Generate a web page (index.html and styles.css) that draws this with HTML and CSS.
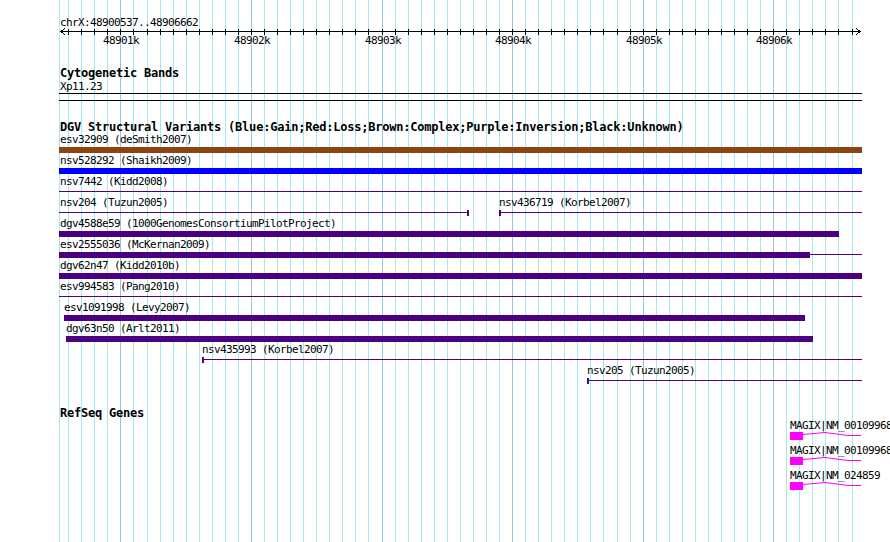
FILE: index.html
```html
<!DOCTYPE html>
<html lang="en">
<head>
  <meta charset="UTF-8">
  <title>chrX:48900537..48906662</title>
  <link rel="stylesheet" href="styles.css">
</head>
<body>
  <div class="browser">
    <div class="grid" id="grid"></div>

    <svg class="ruler" id="ruler" width="890" height="50">
      <text x="60" y="26">chrX:48900537..48906662</text>
      <line class="axis" x1="60" y1="31.5" x2="861" y2="31.5"></line>
      <polyline class="axis" points="65,28 61,31.5 65,35"></polyline>
      <polyline class="axis" points="856,28 860,31.5 856,35"></polyline>
    </svg>

    <section class="track cyto">
      <h2 class="track-title">Cytogenetic Bands</h2>
      <div class="label band-label">Xp11.23</div>
      <div class="band"></div>
    </section>

    <section class="track dgv">
      <h2 class="track-title">DGV Structural Variants (Blue:Gain;Red:Loss;Brown:Complex;Purple:Inversion;Black:Unknown)</h2>

      <div class="row">
        <div class="feature open-left" style="left:59px;width:803px">
          <div class="label">esv32909 (deSmith2007)</div>
          <div class="glyph bar complex"></div>
        </div>
      </div>
      <div class="row">
        <div class="feature open-left" style="left:59px;width:803px">
          <div class="label">nsv528292 (Shaikh2009)</div>
          <div class="glyph bar gain"></div>
        </div>
      </div>
      <div class="row">
        <div class="feature open-left" style="left:59px;width:803px">
          <div class="label">nsv7442 (Kidd2008)</div>
          <div class="glyph span"></div>
        </div>
      </div>
      <div class="row">
        <div class="feature open-left" style="left:59px;width:410px">
          <div class="label">nsv204 (Tuzun2005)</div>
          <div class="glyph span end"></div>
        </div>
        <div class="feature" style="left:499px;width:363px">
          <div class="label">nsv436719 (Korbel2007)</div>
          <div class="glyph span start"></div>
        </div>
      </div>
      <div class="row">
        <div class="feature open-left" style="left:59px;width:780px">
          <div class="label">dgv4588e59 (1000GenomesConsortiumPilotProject)</div>
          <div class="glyph bar"></div>
        </div>
      </div>
      <div class="row">
        <div class="feature open-left" style="left:59px;width:751px">
          <div class="label">esv2555036 (McKernan2009)</div>
          <div class="glyph bar"></div>
        </div>
        <div class="feature" style="left:810px;width:52px">
          <div class="label"></div>
          <div class="glyph span"></div>
        </div>
      </div>
      <div class="row">
        <div class="feature open-left" style="left:59px;width:803px">
          <div class="label">dgv62n47 (Kidd2010b)</div>
          <div class="glyph bar"></div>
        </div>
      </div>
      <div class="row">
        <div class="feature open-left" style="left:59px;width:803px">
          <div class="label">esv994583 (Pang2010)</div>
          <div class="glyph span"></div>
        </div>
      </div>
      <div class="row">
        <div class="feature" style="left:64px;width:741px">
          <div class="label">esv1091998 (Levy2007)</div>
          <div class="glyph bar"></div>
        </div>
      </div>
      <div class="row">
        <div class="feature" style="left:66px;width:747px">
          <div class="label">dgv63n50 (Arlt2011)</div>
          <div class="glyph bar"></div>
        </div>
      </div>
      <div class="row">
        <div class="feature" style="left:202px;width:660px">
          <div class="label">nsv435993 (Korbel2007)</div>
          <div class="glyph span start"></div>
        </div>
      </div>
      <div class="row">
        <div class="feature" style="left:587px;width:275px">
          <div class="label">nsv205 (Tuzun2005)</div>
          <div class="glyph span start"></div>
        </div>
      </div>
    </section>

    <section class="track refseq">
      <h2 class="track-title">RefSeq Genes</h2>
      <div class="gene-row">
        <div class="gene">
          <div class="label">MAGIX|NM_001099680</div>
          <svg class="transcript" width="72" height="8">
            <rect x="0" y="0" width="13" height="8"></rect>
            <polyline points="13,2.5 35,0.5 58,3.5 71,3.5"></polyline>
          </svg>
        </div>
      </div>
      <div class="gene-row">
        <div class="gene">
          <div class="label">MAGIX|NM_001099681</div>
          <svg class="transcript" width="72" height="8">
            <rect x="0" y="0" width="13" height="8"></rect>
            <polyline points="13,2.5 35,0.5 58,3.5 71,3.5"></polyline>
          </svg>
        </div>
      </div>
      <div class="gene-row">
        <div class="gene">
          <div class="label">MAGIX|NM_024859</div>
          <svg class="transcript" width="72" height="8">
            <rect x="0" y="0" width="13" height="8"></rect>
            <polyline points="13,2.5 35,0.5 58,3.5 71,3.5"></polyline>
          </svg>
        </div>
      </div>
    </section>
  </div>

  <script>
    // segment shown: chrX 48900537..48906662
    const START = 48900537;
    const toX = bp => Math.round(60 + (bp - START) * 0.13055);

    const grid = document.getElementById("grid");
    const ruler = document.getElementById("ruler");
    const NS = "http://www.w3.org/2000/svg";

    const addGridLine = (x, major) => {
      const line = document.createElement("div");
      line.className = major ? "grid-line major" : "grid-line";
      line.style.left = x + "px";
      grid.appendChild(line);
    };

    addGridLine(59, false);

    for (let bp = 48900600; bp <= 48906600; bp += 100) {
      const x = toX(bp);
      const major = bp % 1000 === 0;
      addGridLine(x, major);

      const tick = document.createElementNS(NS, "line");
      tick.setAttribute("class", "axis");
      tick.setAttribute("x1", x + 0.5);
      tick.setAttribute("x2", x + 0.5);
      tick.setAttribute("y1", 29);
      tick.setAttribute("y2", 35);
      ruler.appendChild(tick);

      if (major) {
        const label = document.createElementNS(NS, "text");
        label.setAttribute("x", x - 17);
        label.setAttribute("y", 44);
        label.textContent = (bp / 1000) + "k";
        ruler.appendChild(label);
      }
    }
  </script>
</body>
</html>
```

FILE: styles.css
```css
body {
  margin: 0;
  background: #fff;
}

.browser {
  position: relative;
  width: 890px;
  height: 542px;
  overflow: hidden;
  font-family: "DejaVu Sans Mono", monospace;
  font-size: 11px;
  letter-spacing: -0.62px;
  color: #000;
}

/* grid sits under everything */
.grid {
  position: absolute;
  top: 0;
  left: 0;
  right: 0;
  bottom: 0;
}

.grid-line {
  position: absolute;
  top: 0;
  bottom: 0;
  width: 1px;
  background: #a4e9f0;
}

.grid-line.major {
  background: #98c4e6;
}

.ruler {
  position: relative;
  display: block;
}

.ruler text {
  font-family: "DejaVu Sans Mono", monospace;
  font-size: 11px;
  letter-spacing: -0.62px;
  fill: #000;
}

.ruler .axis {
  stroke: #000;
  stroke-width: 1;
  fill: none;
  shape-rendering: crispEdges;
}

.track {
  position: relative;
}

.track-title {
  margin: 0;
  padding-left: 60px;
  font-size: 12px;
  font-weight: bold;
  letter-spacing: -0.22px;
  line-height: 13px;
  height: 11px;
  white-space: nowrap;
}

.label {
  height: 14px;
  line-height: 15px;
  white-space: nowrap;
}

/* cytogenetic bands */
.cyto {
  margin-top: 17px;
}

.band-label {
  height: 15px;
  line-height: 17px;
  padding-left: 60px;
}

.band {
  margin-left: 59px;
  width: 803px;
  height: 6px;
  border-top: 1px solid #000;
  border-bottom: 1px solid #000;
}

/* structural variants */
.dgv {
  margin-top: 20px;
}

.row {
  position: relative;
  height: 21px;
}

.feature {
  position: absolute;
  top: 0;
}

.feature.open-left .label {
  padding-left: 1px;
}

.glyph {
  position: relative;
  margin-top: 1px;
  height: 6px;
}

.bar {
  background: #4b0082;
}

.bar.gain {
  background: #0000ff;
}

.bar.complex {
  background: #8b4513;
}

.span {
  background: linear-gradient(#4b0082, #4b0082) 0 2px / 100% 1px no-repeat;
}

.span.start::before,
.span.end::after {
  content: "";
  position: absolute;
  top: 0;
  width: 2px;
  height: 6px;
  background: #4b0082;
}

.span.start::before {
  left: 0;
}

.span.end::after {
  right: 0;
}

/* refseq genes */
.refseq {
  margin-top: 23px;
}

.gene-row {
  height: 25px;
}

.gene {
  margin-left: 790px;
}

.transcript {
  display: block;
  overflow: visible;
}

.transcript rect {
  fill: #ff00ff;
}

.transcript polyline {
  fill: none;
  stroke: #ff00ff;
  stroke-width: 1;
}
```
